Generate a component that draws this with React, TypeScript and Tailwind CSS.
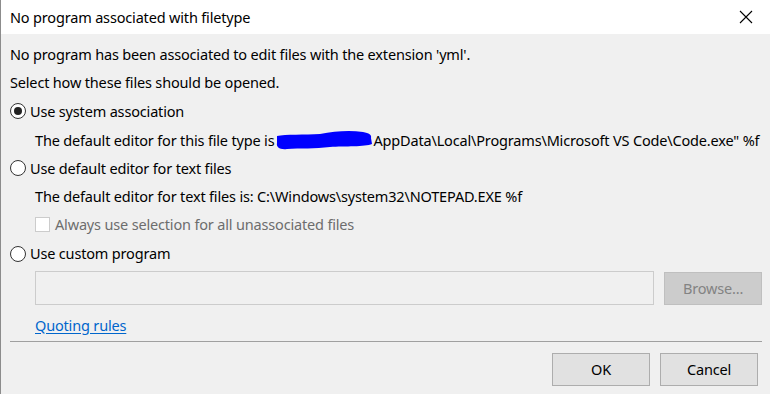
import React from "react";

const font = { fontFamily: '"Noto Sans", "Open Sans", sans-serif' };

function Radio({ checked }: { checked?: boolean }) {
  return (
    <span className="w-[16px] h-[16px] rounded-full border border-[#333333] bg-white flex items-center justify-center shrink-0">
      {checked && <span className="w-[8px] h-[8px] rounded-full bg-[#222222]" />}
    </span>
  );
}

export default function App() {
  return (
    <div className="w-[770px] h-[394px] bg-[#f0f0f0] border-l border-[#8c8c8c] flex flex-col text-[14.5px] tracking-[-0.17px] text-black leading-none overflow-hidden" style={font}>
      <div className="h-[34px] bg-white flex items-center justify-between pl-[9px] pr-[12px] shrink-0">
        <span>No program associated with filetype</span>
        <svg width="16" height="16" viewBox="0 0 16 16" className="mr-[4px]">
          <path d="M2 2 L14 14 M14 2 L2 14" stroke="#000" strokeWidth="1.1" />
        </svg>
      </div>
      <div className="flex flex-col pl-[9px] pr-[8px] pt-[6px]">
        <div className="h-[28px] flex items-center">No program has been associated to edit files with the extension 'yml'.</div>
        <div className="h-[28px] flex items-center">Select how these files should be opened.</div>
        <div className="h-[30px] flex items-center gap-[4px]">
          <Radio checked />
          <span>Use system association</span>
        </div>
        <div className="h-[28px] flex items-center pl-[25px] whitespace-nowrap">
          <span>The default editor for this file type is</span>
          <svg width="98" height="20" viewBox="0 0 98 20" className="shrink-0 ml-[1px]">
            <path d="M2 6 C10 4 30 5 45 4 C60 1 75 0 88 2 C94 3 97 5 96 8 L97 14 C90 17 70 16 55 17 C40 19 25 18 12 19 C5 20 1 17 2 13 Z" fill="#0000ff" />
          </svg>
          <span>AppData\Local\Programs\Microsoft VS Code\Code.exe" %f</span>
        </div>
        <div className="h-[28px] flex items-center gap-[4px]">
          <Radio />
          <span>Use default editor for text files</span>
        </div>
        <div className="h-[28px] flex items-center pl-[25px]">The default editor for text files is: C:\Windows\system32\NOTEPAD.EXE %f</div>
        <div className="h-[29px] flex items-center pl-[25px] gap-[5px] text-[#6d6d6d]">
          <span className="w-[15px] h-[15px] border border-[#cccccc] bg-white shrink-0" />
          <span>Always use selection for all unassociated files</span>
        </div>
        <div className="h-[29px] flex items-center gap-[4px]">
          <Radio />
          <span>Use custom program</span>
        </div>
        <div className="flex items-center pl-[25px] mt-[3px] gap-[10px]">
          <div className="w-[620px] h-[34px] border border-[#cccccc] bg-[#f0f0f0]" />
          <div className="w-[98px] h-[33px] bg-[#cccccc] border border-[#bfbfbf] text-[#838383] flex items-center justify-center">Browse...</div>
        </div>
        <div className="h-[20px] mt-[10px] pl-[25px] flex items-center">
          <span className="text-[#0066cc] underline underline-offset-2">Quoting rules</span>
        </div>
        <div className="h-px bg-[#a0a0a0] mt-[6px]" />
        <div className="flex justify-end gap-[10px] mt-[11px] pr-[4px]">
          <div className="w-[98px] h-[33px] bg-[#e1e1e1] border border-[#adadad] flex items-center justify-center">OK</div>
          <div className="w-[98px] h-[33px] bg-[#e1e1e1] border border-[#adadad] flex items-center justify-center">Cancel</div>
        </div>
      </div>
    </div>
  );
}
